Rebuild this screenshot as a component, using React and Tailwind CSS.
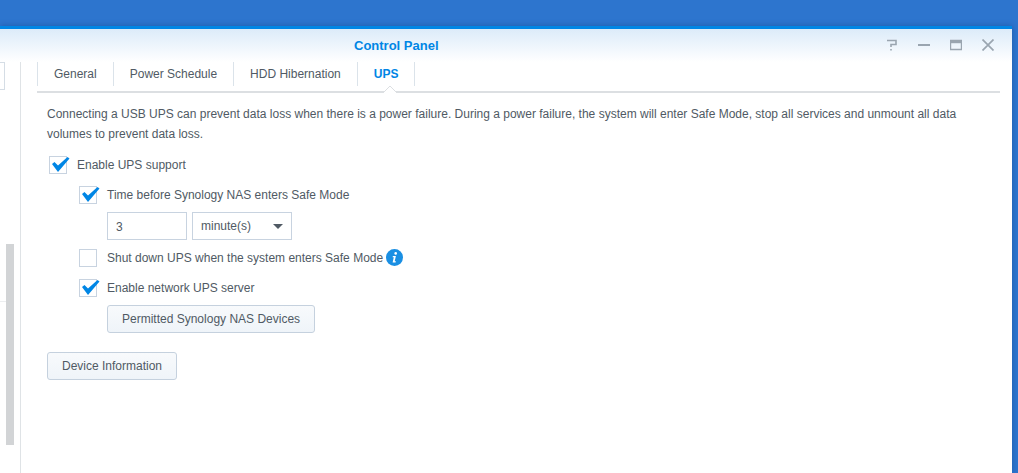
import React from "react";

function Check({ checked, label, children }) {
  return (
    <div className="flex items-center h-[20px]">
      <div className="relative w-[18px] h-[18px] border border-[#c8d3e0] bg-white shrink-0">
        {checked && (
          <svg className="absolute left-[1px] -top-[3px]" width="20" height="20" viewBox="0 0 20 20">
            <path d="M1 10 L3.5 8 L7 11.5 L16.5 3 L18.5 4.5 L7 18 Z" fill="#0086e5" />
          </svg>
        )}
      </div>
      <span className="ml-[10px]">{label}</span>
      {children}
    </div>
  );
}

function Btn({ label }) {
  return (
    <button className="h-[28px] px-[14px] rounded-[3px] border border-[#c5d1de] bg-gradient-to-b from-[#f8fafc] to-[#eff4f9] text-[#505a64]">
      {label}
    </button>
  );
}

function Tab({ label, active }) {
  return (
    <div className={`flex items-center h-[24px] px-4 border-r border-[#dbe3ea] ${active ? "text-[#0086e5] font-bold" : ""}`}>
      {label}
    </div>
  );
}

export default function App() {
  return (
    <div className="w-[1018px] h-[473px] overflow-hidden bg-[#2d75ce] pt-[26px] text-[12px] text-[#505a64] font-['Liberation_Sans',Arial,sans-serif]">
      <div className="w-[1012px] h-[447px] bg-white border-t-[3px] border-[#0086e5] shadow-[0_0_6px_rgba(0,40,100,0.35)] flex flex-col">
        <div className="relative h-[33px] shrink-0 flex items-center pl-[354px] bg-gradient-to-b from-[#dcebf9] to-white">
          <span className="text-[13px] font-bold text-[#0086e5] mt-[1px]">Control Panel</span>
          <div className="absolute right-[18px] top-[10px] flex items-center gap-[20px]">
            <svg width="12" height="12" viewBox="0 0 12 12" fill="none" stroke="#9aa5b0" strokeWidth="1.6">
              <path d="M1 1.5 H10 V5.5 H5 V8" />
              <path d="M4.2 10.8 H5.8" />
            </svg>
            <svg width="12" height="12" viewBox="0 0 12 12" stroke="#9aa5b0" strokeWidth="2">
              <path d="M0 6 H12" />
            </svg>
            <svg width="12" height="12" viewBox="0 0 12 12" fill="none" stroke="#9aa5b0">
              <path d="M0.5 1.5 H11.5 V10.5 H0.5 Z" strokeWidth="1.4" />
              <path d="M0.5 3 H11.5" strokeWidth="2.4" />
            </svg>
            <svg width="12" height="12" viewBox="0 0 12 12" stroke="#9aa5b0" strokeWidth="1.7">
              <path d="M0.5 0.5 L11.5 11.5 M11.5 0.5 L0.5 11.5" />
            </svg>
          </div>
        </div>

        <div className="flex flex-1 min-h-0">
          <div className="w-[21px] shrink-0 border-r border-[#dfe3e6] flex">
            <div className="w-[6px]">
              <div className="w-[5px] h-[28px] border border-l-0 border-[#d5dde5]" />
              <div className="h-px mt-[211px] bg-[#eceef0]" />
            </div>
            <div className="w-[8px] h-[201px] mt-[182px] bg-[#d2d4d6]" />
          </div>

          <div className="flex-1 pl-[16px] pr-[12px]">
            <div className="relative flex h-[31px] border-b-2 border-[#dcdfe2]">
              <div className="flex border-l border-[#dbe3ea] h-[24px]">
                <Tab label="General" />
                <Tab label="Power Schedule" />
                <Tab label="HDD Hibernation" />
                <Tab label="UPS" active />
              </div>
              <div className="absolute left-[346px] -bottom-[2px] w-[14px] h-[7px] flex">
                <svg width="14" height="7" viewBox="0 0 14 7">
                  <path d="M0 7 L7 0 L14 7" fill="white" stroke="#dcdfe2" />
                </svg>
              </div>
            </div>

            <div className="pl-[10px] pt-[11px]">
              <p className="leading-[20px] w-[930px]">
                Connecting a USB UPS can prevent data loss when there is a power failure. During a power failure, the system will enter Safe Mode, stop all services and unmount all data volumes to prevent data loss.
              </p>
              <div className="mt-[11px] ml-[2px]">
                <Check checked label="Enable UPS support" />
                <div className="ml-[30px] mt-[10px]">
                  <Check checked label="Time before Synology NAS enters Safe Mode" />
                  <div className="flex gap-[5px] ml-[28px] mt-[7px]">
                    <div className="w-[80px] h-[28px] border border-[#c8d3e0] pl-[8px] pt-[2px] flex items-center">3</div>
                    <div className="w-[100px] h-[28px] border border-[#c8d3e0] pl-[8px] pr-[8px] flex items-center justify-between">
                      <span>minute(s)</span>
                      <span className="w-0 h-0 border-x-[5px] border-x-transparent border-t-[5px] border-t-[#505a64]" />
                    </div>
                  </div>
                  <div className="mt-[8px]">
                    <Check label="Shut down UPS when the system enters Safe Mode">
                      <svg className="ml-[3px] mt-[-1px]" width="17" height="17" viewBox="0 0 17 17">
                        <circle cx="8.5" cy="8.5" r="8.5" fill="#1a8fe3" />
                        <circle cx="9.7" cy="4.4" r="1.3" fill="white" />
                        <path d="M6.9 7 H9.9 L8.7 12.2 H9.9 L9.6 13.4 H6.6 L7.8 8.2 H6.6 Z" fill="white" />
                      </svg>
                    </Check>
                  </div>
                  <div className="mt-[10px]">
                    <Check checked label="Enable network UPS server" />
                  </div>
                  <div className="ml-[28px] mt-[7px]">
                    <Btn label="Permitted Synology NAS Devices" />
                  </div>
                </div>
              </div>
              <div className="mt-[19px]">
                <Btn label="Device Information" />
              </div>
            </div>
          </div>
        </div>
      </div>
    </div>
  );
}
